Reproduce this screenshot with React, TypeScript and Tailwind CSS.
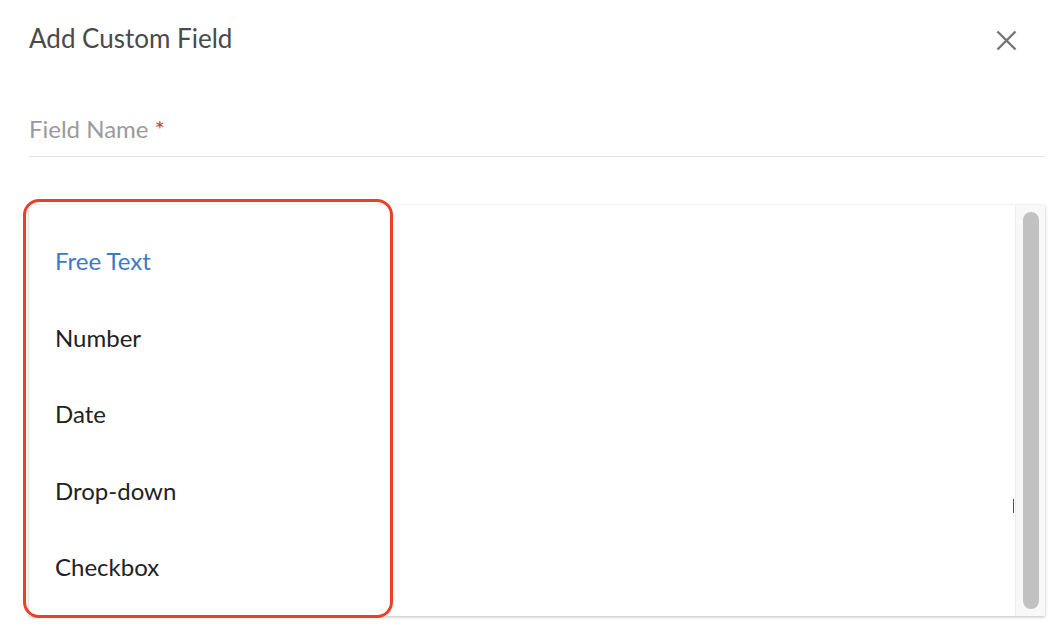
const OPTIONS = ['Free Text', 'Number', 'Date', 'Drop-down', 'Checkbox']

export default function App() {
  return (
    <main className="relative h-[642px] w-[1064px] overflow-hidden bg-white font-['Lato',sans-serif]">
      <div className="flex flex-col px-[29px] pt-[22px]">
        <header className="flex items-center justify-between">
          <h1 className="text-[26px] leading-[32px] text-[#4a4a4a]">Add Custom Field</h1>
          <button type="button" className="mr-[18px] mt-[4px] text-[#757575]" aria-label="Close">
            <svg width="21" height="21" viewBox="0 0 21 21" fill="none" stroke="currentColor" strokeWidth="2.4">
              <path d="M1.5 1.5L19.5 19.5M19.5 1.5L1.5 19.5" />
            </svg>
          </button>
        </header>

        <div className="mt-[61px] mr-[-10px] border-b border-[#e3e3e3] pb-[12px]">
          <label className="text-[24px] leading-[28px] text-[#9b9b9b]">
            Field Name <span className="text-[#e53935]">*</span>
          </label>
        </div>

        {/* options menu */}
        <div className="mt-[48px] mr-[-10px] flex h-[411px] bg-white shadow-[0_1px_3px_rgba(0,0,0,0.25)]">
          <ul className="flex flex-1 flex-col pt-[18px]">
            {OPTIONS.map((opt, i) => (
              <li
                key={opt}
                className={
                  'flex h-[76.5px] items-center pl-[26px] text-[24px] ' +
                  (i === 0 ? 'text-[#3a7bc8]' : 'text-[#222]')
                }
              >
                {opt}
              </li>
            ))}
          </ul>
          <div className="relative flex w-[30px] justify-center border-l border-[#ececec] bg-[#f8f8f8] py-[7px]">
            <div className="h-full w-[16px] rounded-full bg-[#c1c1c1]" />
          </div>
        </div>
      </div>

      {/* annotation highlight */}
      <div className="absolute left-[23px] top-[199px] h-[419px] w-[370px] rounded-[16px] border-[3px] border-[#ec3f26]" />
      <div className="absolute left-[1013px] top-[499px] h-[14px] w-[1px] bg-[#555]" />
    </main>
  )
}
